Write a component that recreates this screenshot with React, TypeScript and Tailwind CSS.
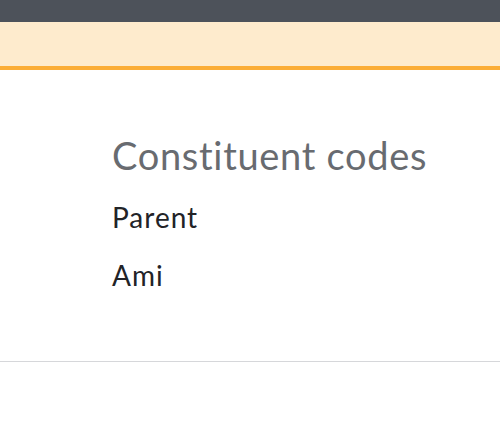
export default function App() {
  return (
    <div className="w-[500px] h-[429px] bg-white overflow-hidden" style={{ fontFamily: "Lato, 'Open Sans', sans-serif" }}>
      <div className="h-[22px] bg-[#4d525a]" />
      <div className="h-[48px] bg-[#feebcd] border-b-4 border-[#fbad36]" />
      <div className="h-[292px] border-b border-[#d6d7da] pl-[112px] pt-[62px]">
        <h2 className="text-[38px] leading-[46px] text-[#686b70] tracking-[0.7px]">Constituent codes</h2>
        <div className="mt-[22px] text-[28px] leading-[34px] text-[#222327] tracking-[1px]">Parent</div>
        <div className="mt-[24px] text-[28px] leading-[34px] text-[#222327] tracking-[1px]">Ami</div>
      </div>
    </div>
  );
}
